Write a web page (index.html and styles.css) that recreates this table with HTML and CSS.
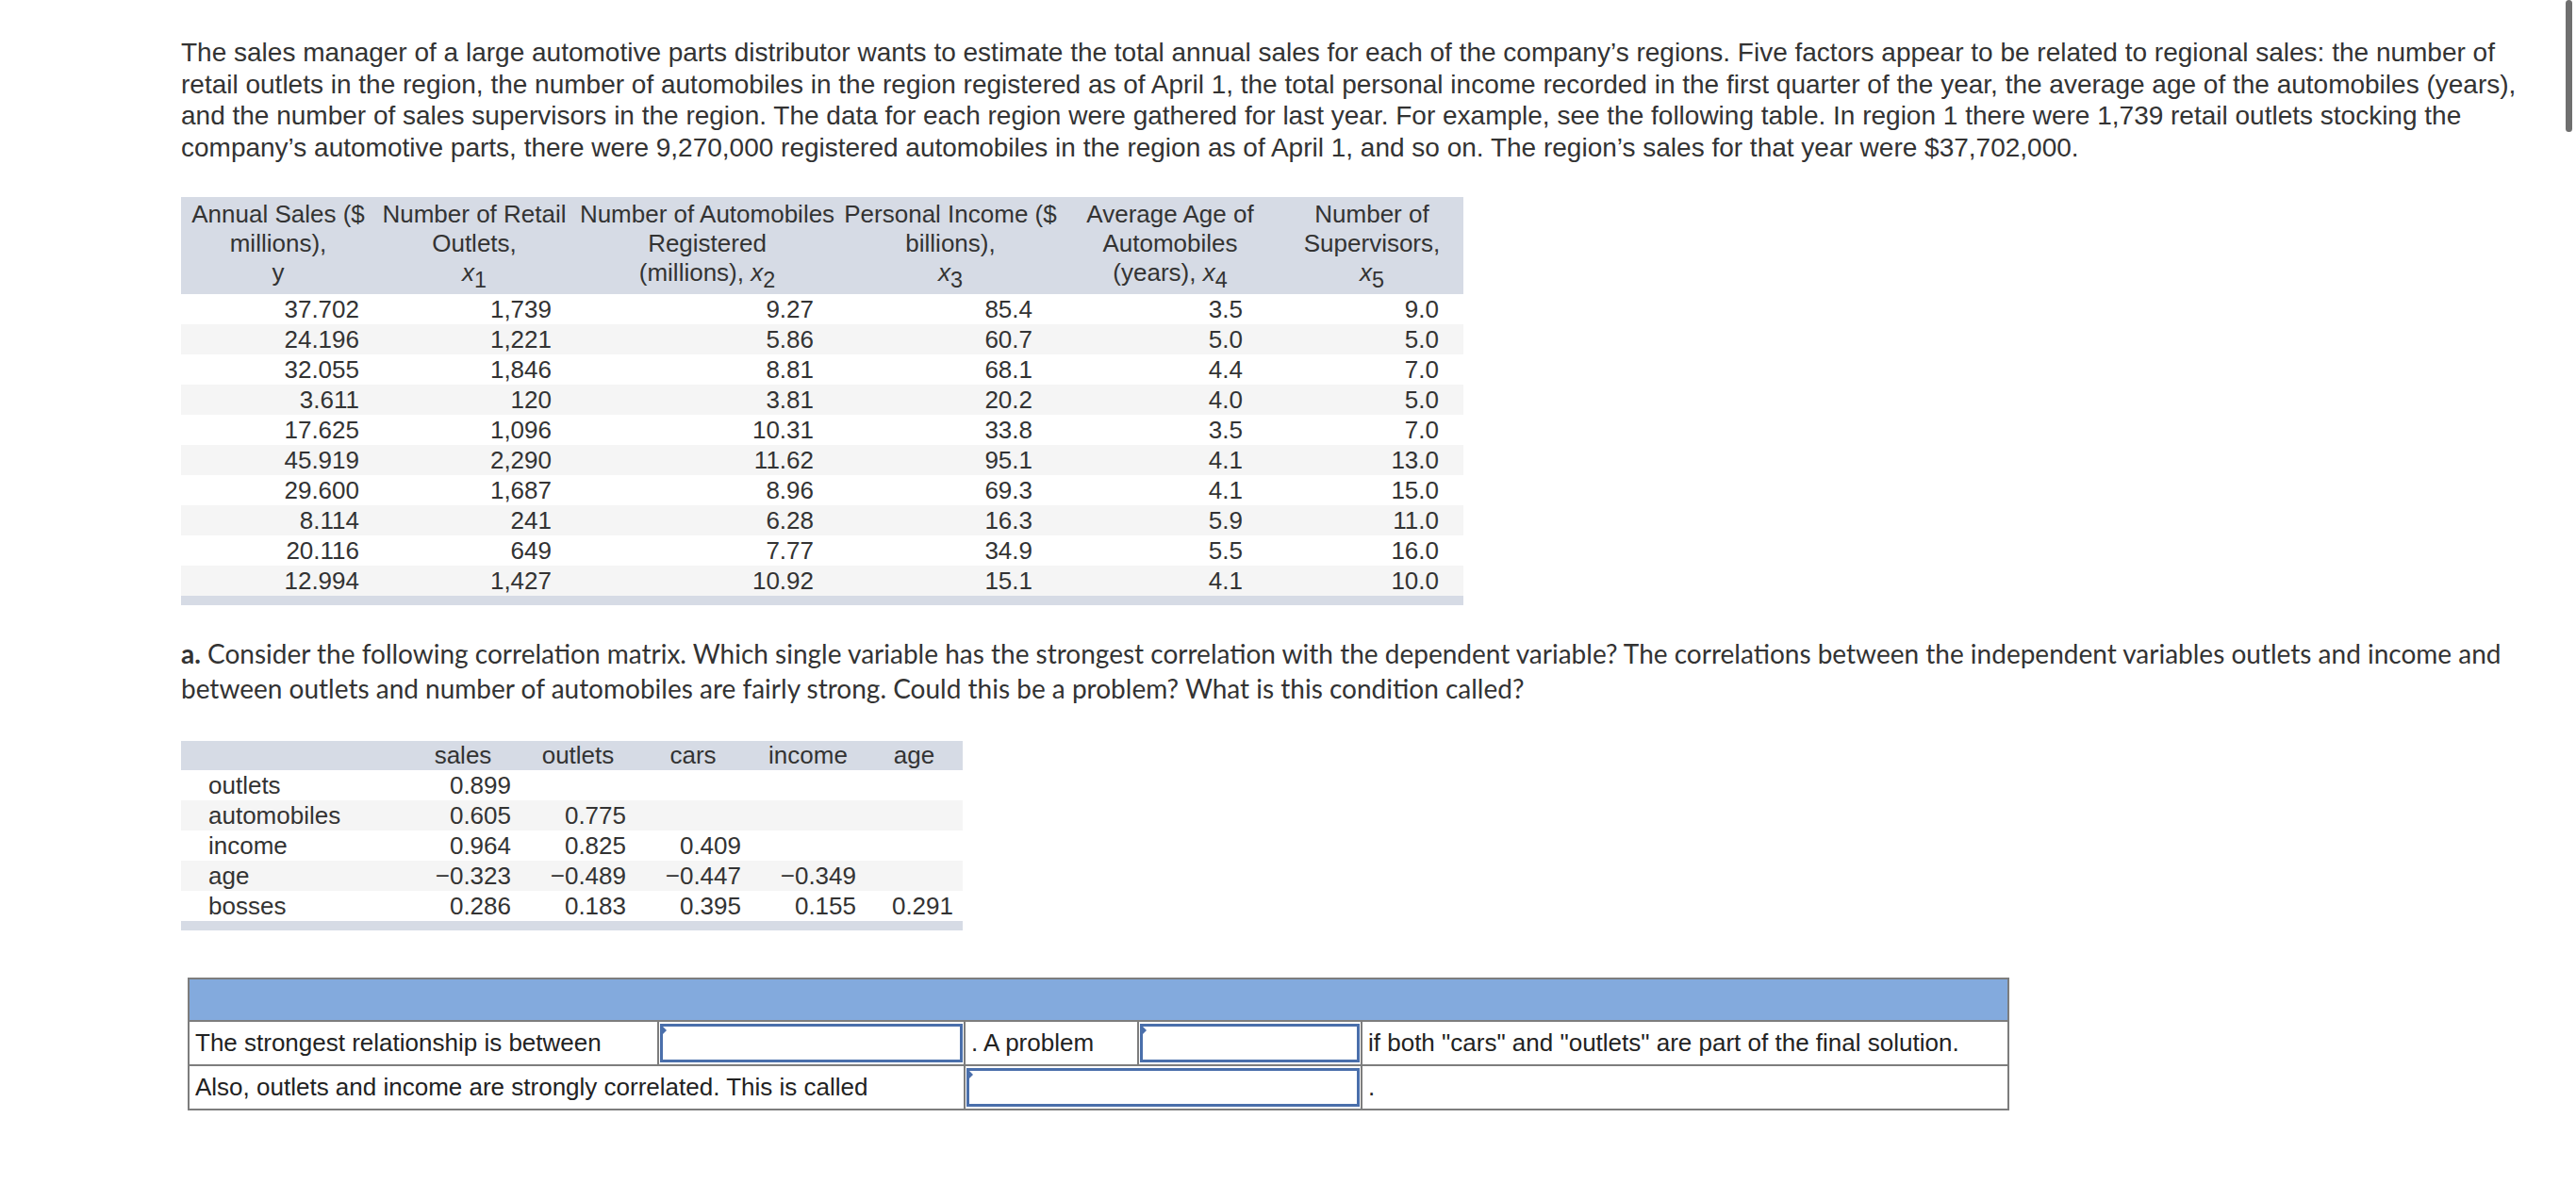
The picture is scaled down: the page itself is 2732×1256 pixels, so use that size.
FILE: index.html
```html
<!DOCTYPE html>
<html lang="en">
<head>
<meta charset="utf-8">
<title>Regional sales regression</title>
<link rel="stylesheet" href="styles.css">
</head>
<body>
<div class="scroll-thumb"></div>
<main class="page">
  <p class="intro">The sales manager of a large automotive parts distributor wants to estimate the total annual sales for each of the company’s regions. Five factors appear to be related to regional sales: the number of retail outlets in the region, the number of automobiles in the region registered as of April 1, the total personal income recorded in the first quarter of the year, the average age of the automobiles (years), and the number of sales supervisors in the region. The data for each region were gathered for last year. For example, see the following table. In region 1 there were 1,739 retail outlets stocking the company’s automotive parts, there were 9,270,000 registered automobiles in the region as of April 1, and so on. The region’s sales for that year were $37,702,000.</p>

  <table class="data">
    <colgroup>
      <col class="w1"><col class="w2"><col class="w3"><col class="w4"><col class="w5"><col class="w6">
    </colgroup>
    <thead>
      <tr>
        <th>Annual Sales ($<br>millions),<br>y</th>
        <th>Number of Retail<br>Outlets,<br><i>x</i><sub>1</sub></th>
        <th>Number of Automobiles<br>Registered<br>(millions), <i>x</i><sub>2</sub></th>
        <th>Personal Income ($<br>billions),<br><i>x</i><sub>3</sub></th>
        <th>Average Age of<br>Automobiles<br>(years), <i>x</i><sub>4</sub></th>
        <th>Number of<br>Supervisors,<br><i>x</i><sub>5</sub></th>
      </tr>
    </thead>
    <tbody>
      <tr><td>37.702</td><td>1,739</td><td>9.27</td><td>85.4</td><td>3.5</td><td>9.0</td></tr>
      <tr><td>24.196</td><td>1,221</td><td>5.86</td><td>60.7</td><td>5.0</td><td>5.0</td></tr>
      <tr><td>32.055</td><td>1,846</td><td>8.81</td><td>68.1</td><td>4.4</td><td>7.0</td></tr>
      <tr><td>3.611</td><td>120</td><td>3.81</td><td>20.2</td><td>4.0</td><td>5.0</td></tr>
      <tr><td>17.625</td><td>1,096</td><td>10.31</td><td>33.8</td><td>3.5</td><td>7.0</td></tr>
      <tr><td>45.919</td><td>2,290</td><td>11.62</td><td>95.1</td><td>4.1</td><td>13.0</td></tr>
      <tr><td>29.600</td><td>1,687</td><td>8.96</td><td>69.3</td><td>4.1</td><td>15.0</td></tr>
      <tr><td>8.114</td><td>241</td><td>6.28</td><td>16.3</td><td>5.9</td><td>11.0</td></tr>
      <tr><td>20.116</td><td>649</td><td>7.77</td><td>34.9</td><td>5.5</td><td>16.0</td></tr>
      <tr><td>12.994</td><td>1,427</td><td>10.92</td><td>15.1</td><td>4.1</td><td>10.0</td></tr>
    </tbody>
    <tfoot>
      <tr><td colspan="6" class="foot"></td></tr>
    </tfoot>
  </table>

  <p class="question"><b>a.</b> Consider the following correlation matrix. Which single variable has the strongest correlation with the dependent variable? The correlations between the independent variables outlets and income and between outlets and number of automobiles are fairly strong. Could this be a problem? What is this condition called?</p>

  <table class="corr">
    <colgroup>
      <col class="c0"><col class="c1"><col class="c1"><col class="c1"><col class="c1"><col class="c5">
    </colgroup>
    <thead>
      <tr><th></th><th>sales</th><th>outlets</th><th>cars</th><th>income</th><th>age</th></tr>
    </thead>
    <tbody>
      <tr><td class="lab">outlets</td><td>0.899</td><td></td><td></td><td></td><td></td></tr>
      <tr><td class="lab">automobiles</td><td>0.605</td><td>0.775</td><td></td><td></td><td></td></tr>
      <tr><td class="lab">income</td><td>0.964</td><td>0.825</td><td>0.409</td><td></td><td></td></tr>
      <tr><td class="lab">age</td><td>−0.323</td><td>−0.489</td><td>−0.447</td><td>−0.349</td><td></td></tr>
      <tr><td class="lab">bosses</td><td>0.286</td><td>0.183</td><td>0.395</td><td>0.155</td><td>0.291</td></tr>
    </tbody>
    <tfoot>
      <tr><td colspan="6" class="foot"></td></tr>
    </tfoot>
  </table>

  <table class="answer">
    <colgroup>
      <col class="a1"><col class="a2"><col class="a3"><col class="a4"><col class="a5">
    </colgroup>
    <thead>
      <tr><th colspan="5"></th></tr>
    </thead>
    <tbody>
      <tr>
        <td>The strongest relationship is between</td>
        <td class="slot"><div class="box"><span class="flag"></span></div></td>
        <td>. A problem</td>
        <td class="slot"><div class="box"><span class="flag"></span></div></td>
        <td>if both "cars" and "outlets" are part of the final solution.</td>
      </tr>
      <tr>
        <td colspan="2">Also, outlets and income are strongly correlated. This is called</td>
        <td colspan="2" class="slot"><div class="box"><span class="flag"></span></div></td>
        <td class="dot">.</td>
      </tr>
    </tbody>
  </table>
</main>
</body>
</html>
```

FILE: styles.css
```css
html, body {
  margin: 0;
  padding: 0;
  background: #ffffff;
}

body {
  color: #333333;
  font-family: "Liberation Sans", Arial, sans-serif;
}

.page {
  padding: 39px 52px 60px 192px;
}

.intro {
  margin: 0;
  font-size: 28px;
  line-height: 33.6px;
  color: #333333;
}

/* ---------- data table ---------- */
.data {
  margin-top: 36px;
  border-collapse: collapse;
  border-spacing: 0;
  table-layout: fixed;
  width: 1360px;
  font-size: 26px;
  color: #333333;
}

.data .w1 { width: 206px; }
.data .w2 { width: 210px; }
.data .w3 { width: 284px; }
.data .w4 { width: 232px; }
.data .w5 { width: 234px; }
.data .w6 { width: 194px; }

.data thead th {
  background: #d6dbe5;
  font-weight: normal;
  text-align: center;
  white-space: nowrap;
  line-height: 31px;
  padding: 3px 0 7px 0;
  height: 93px;
  vertical-align: middle;
}

.data sub {
  font-size: 0.9em;
  line-height: 0;
  vertical-align: -0.3em;
}

.data tbody td {
  height: 32px;
  padding: 0;
  line-height: 32px;
  text-align: right;
  white-space: nowrap;
}

.data tbody tr:nth-child(even) td { background: #f5f5f5; }

.data tbody td:nth-child(1) { padding-right: 17px; }
.data tbody td:nth-child(2) { padding-right: 23px; }
.data tbody td:nth-child(3) { padding-right: 29px; }
.data tbody td:nth-child(4) { padding-right: 29px; }
.data tbody td:nth-child(5) { padding-right: 40px; }
.data tbody td:nth-child(6) { padding-right: 26px; }

.data .foot,
.corr .foot {
  height: 10px;
  padding: 0;
  background: #d6dbe5;
}

/* ---------- question ---------- */
.question {
  margin: 33px 0 0 0;
  font-family: "Lato", "Liberation Sans", sans-serif;
  font-size: 28px;
  line-height: 36.8px;
  color: #333333;
}

.question b {
  font-weight: 700;
}

/* ---------- correlation matrix ---------- */
.corr {
  margin-top: 37px;
  border-collapse: collapse;
  border-spacing: 0;
  table-layout: fixed;
  width: 829px;
  font-size: 26px;
  color: #333333;
}

.corr .c0 { width: 238px; }
.corr .c1 { width: 122px; }
.corr .c5 { width: 103px; }

.corr thead th {
  background: #d6dbe5;
  font-weight: normal;
  text-align: center;
  height: 31px;
  line-height: 31px;
  padding: 0;
}

.corr tbody td {
  height: 32px;
  line-height: 32px;
  padding: 0 10px 0 0;
  text-align: right;
  white-space: nowrap;
}

.corr tbody td.lab {
  text-align: left;
  padding: 0 0 0 29px;
}

.corr tbody tr:nth-child(even) td { background: #f5f5f5; }

/* ---------- answer grid ---------- */
.answer {
  margin: 50px 0 0 7px;
  border-collapse: collapse;
  border-spacing: 0;
  table-layout: fixed;
  width: 1930px;
  font-size: 26px;
  color: #222222;
}

.answer .a1 { width: 498px; }
.answer .a2 { width: 325px; }
.answer .a3 { width: 184px; }
.answer .a4 { width: 237px; }
.answer .a5 { width: 686px; }

.answer th,
.answer td {
  border: 2px solid #7d7d7d;
}

.answer thead th {
  background: #83aadd;
  height: 43px;
  padding: 0;
}

.answer tbody td {
  height: 43px;
  padding: 0 6px;
  white-space: nowrap;
  vertical-align: middle;
}

.answer tbody td.slot {
  padding: 1px;
}

.answer .box {
  position: relative;
  box-sizing: border-box;
  height: 41px;
  border: 3px solid #4a6fab;
  background: #ffffff;
}

.answer .flag {
  position: absolute;
  left: -3px;
  top: -3px;
  width: 0;
  height: 0;
  border-top: 7px solid transparent;
  border-bottom: 7px solid transparent;
  border-left: 7px solid #4a6fab;
}

.answer td.dot {
  vertical-align: middle;
}

/* ---------- page scrollbar thumb overlay ---------- */
.scroll-thumb {
  position: fixed;
  top: 0;
  right: 4px;
  width: 7px;
  height: 140px;
  background: #6f6f6f;
  border-radius: 4px;
}
```
